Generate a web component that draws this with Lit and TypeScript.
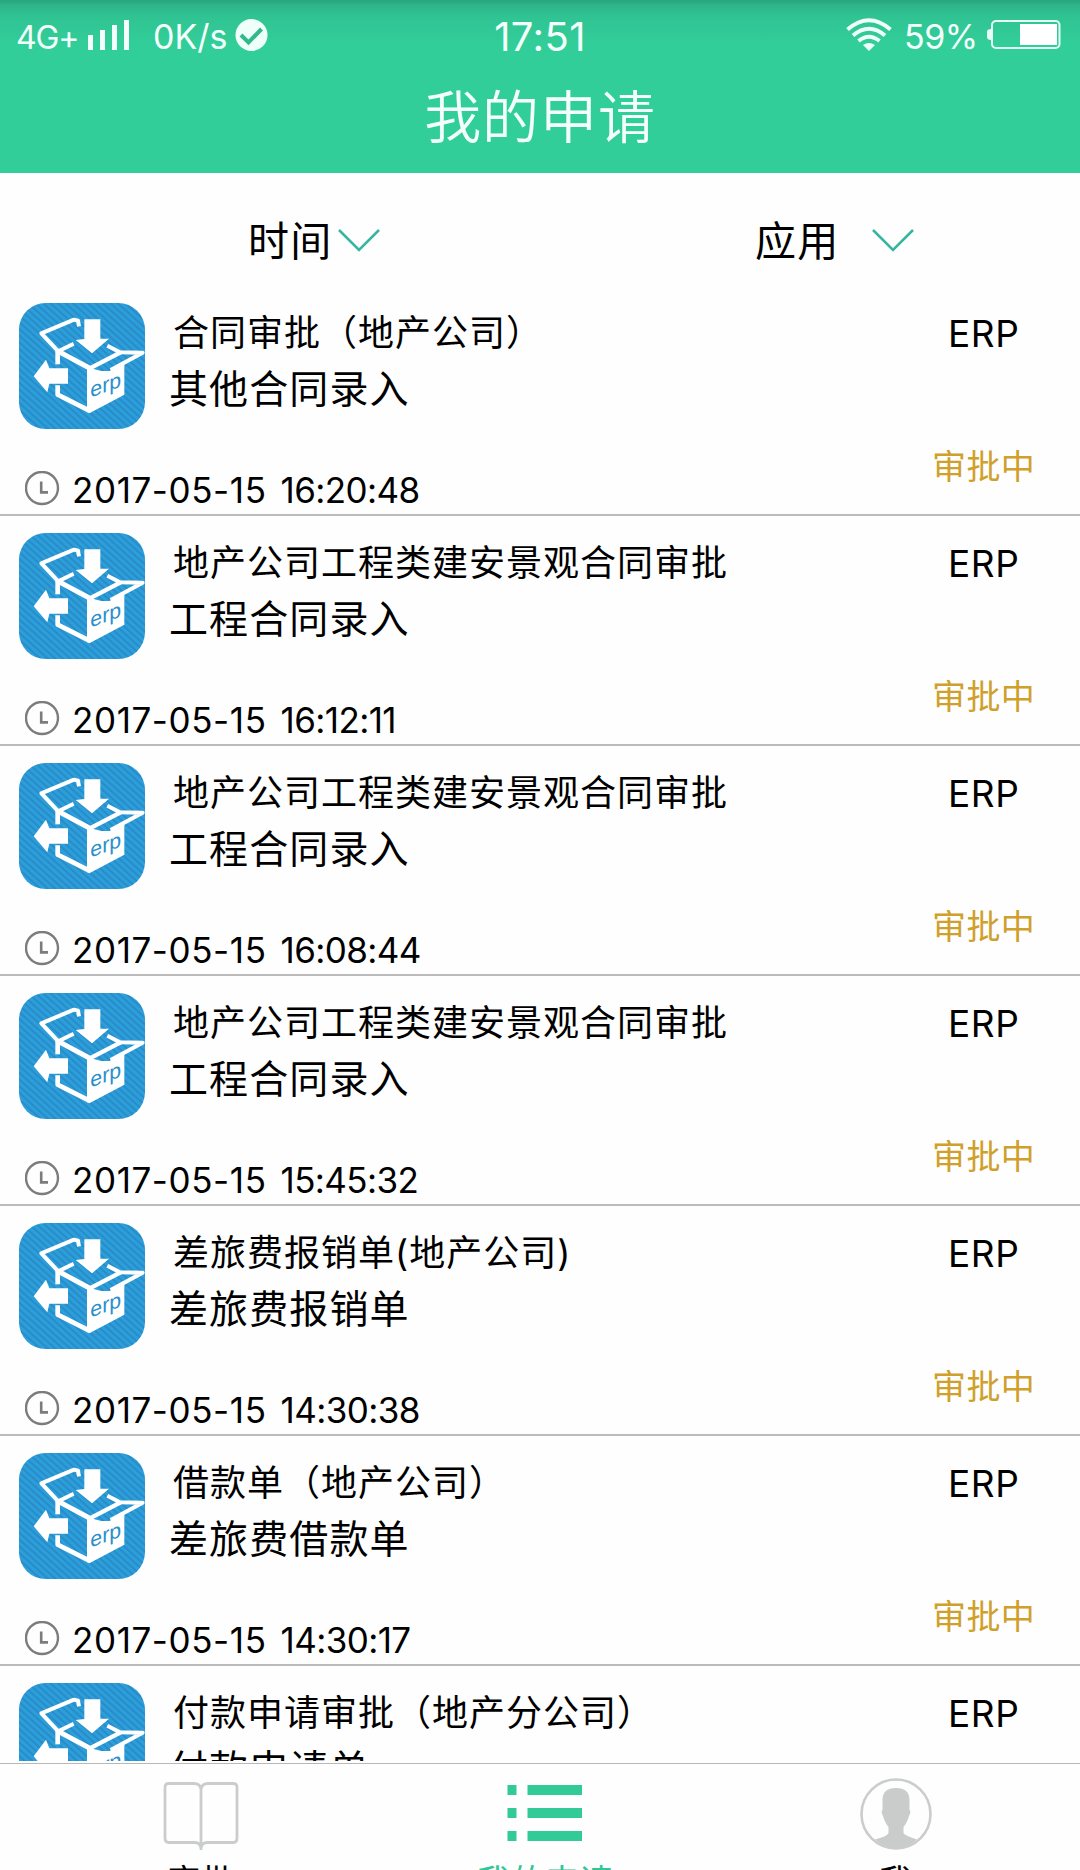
import { LitElement, html, css, nothing } from "lit";
import { customElement, property } from "lit/decorators.js";

interface Application {
  title: string;
  kind: string;
  date?: string;
  time?: string;
}

const APPLICATIONS: Application[] = [
  { title: "合同审批（地产公司）", kind: "其他合同录入", date: "2017-05-15", time: "16:20:48" },
  { title: "地产公司工程类建安景观合同审批", kind: "工程合同录入", date: "2017-05-15", time: "16:12:11" },
  { title: "地产公司工程类建安景观合同审批", kind: "工程合同录入", date: "2017-05-15", time: "16:08:44" },
  { title: "地产公司工程类建安景观合同审批", kind: "工程合同录入", date: "2017-05-15", time: "15:45:32" },
  { title: "差旅费报销单(地产公司)", kind: "差旅费报销单", date: "2017-05-15", time: "14:30:38" },
  { title: "借款单（地产公司）", kind: "差旅费借款单", date: "2017-05-15", time: "14:30:17" },
  { title: "付款申请审批（地产分公司）", kind: "付款申请单" },
];

@customElement("erp-icon")
export class ErpIcon extends LitElement {
  static styles = css`
    :host { display: block; width: 126px; height: 126px; }
    .art { display: block; width: 100%; height: 100%; }
    .word { font-family: "Liberation Sans", sans-serif; font-size: 64px; fill: #2a8fcb; }
  `;
  render() {
    return html`
      <svg class="art" viewBox="57 39 378 378">
        <defs>
          <pattern id="stripes" width="15" height="15" patternUnits="userSpaceOnUse" patternTransform="rotate(42)">
            <rect width="15" height="15" fill="#2b9fdc" />
            <rect width="15" height="6" fill="#2a8cc6" />
          </pattern>
        </defs>
        <rect x="57" y="39" width="378" height="378" rx="80" fill="url(#stripes)" />
        <g fill="none" stroke="#fff" stroke-width="12" stroke-linejoin="round">
          <path d="M237 109 L234 92 L222 89 L124 130 L175 184 L221 161" />
          <path d="M173 180 V223" stroke-width="14" />
          <path d="M173 286 V314 L268 362" stroke-width="14" />
          <path d="M175 184 L268 234" stroke-width="15" />
          <path d="M322 167 L360 187 L428 188 L332 240" />
          <path d="M268 236 L362 187" stroke-width="13" />
        </g>
        <path d="M261 232 L304 243 L328 243 L373 221 V314 L268 370 L261 366 Z" fill="#fff" />
        <path d="M253 88 H301 V146 H327 L276 190 L227 150 L253 147 Z" fill="#fff" />
        <path d="M101 259 L138 209 L148 235 H204 V281 H148 L142 307 Z" fill="#fff" />
        <text class="word" transform="matrix(1 -0.37 0 1 271 323)">erp</text>
      </svg>
    `;
  }
}

@customElement("application-row")
export class ApplicationRow extends LitElement {
  @property({ attribute: false }) item!: Application;

  static styles = css`
    :host {
      display: flex;
      flex-direction: column;
      justify-content: space-between;
      box-sizing: border-box;
      flex: none;
      height: 230px;
      padding-top: 17px;
      border-bottom: 2px solid #bbb;
      white-space: nowrap;
    }
    .top { display: flex; padding-left: 19px; height: 126px; }
    .texts { flex: 1; display: flex; flex-direction: column; padding: 4px 0 0 24px; }
    .title { font-size: 36px; line-height: 52px; letter-spacing: 1px; padding-left: 4px; }
    .kind { font-size: 39px; line-height: 60px; letter-spacing: 1.1px; }
    .source { width: 132px; font-size: 37px; line-height: 61px; letter-spacing: 0.6px; }
    .bottom { display: flex; height: 85px; padding: 36px 45px 0 25px; box-sizing: border-box; justify-content: space-between; }
    .when { display: flex; font-size: 35px; line-height: 51px; }
    .clock { width: 35px; height: 35px; margin: 6px 12px 0 0; }
    .date { letter-spacing: 0.6px; margin-right: 14px; }
    .time { letter-spacing: -0.6px; }
    .status { font-size: 34px; line-height: 40px; letter-spacing: 0.3px; color: #cfa12c; margin-top: -18px; }
  `;

  render() {
    const { title, kind, date, time } = this.item;
    return html`
      <div class="top">
        <erp-icon></erp-icon>
        <div class="texts">
          <span class="title">${title}</span>
          <span class="kind">${kind}</span>
        </div>
        <span class="source">ERP</span>
      </div>
      ${date
        ? html`<div class="bottom">
            <div class="when">
              <svg class="clock" viewBox="0 0 35 35" fill="none" stroke="#7c7c7c">
                <circle cx="17" cy="17" r="16" stroke-width="2.4" />
                <path d="M16.2 10.5 V21.4 H23" stroke-width="2.6" />
              </svg>
              <span class="date">${date}</span>
              <span class="time">${time}</span>
            </div>
            <span class="status">审批中</span>
          </div>`
        : nothing}
    `;
  }
}

@customElement("app-root")
export class AppRoot extends LitElement {
  static styles = css`
    :host {
      display: flex;
      flex-direction: column;
      width: 1080px;
      height: 1870px;
      overflow: hidden;
      background: #fefefe;
      color: #000;
      font-family: Inter, "Noto Sans CJK SC", sans-serif;
      white-space: nowrap;
    }
    .header {
      flex: none;
      height: 173px;
      color: #f4fffb;
      background: linear-gradient(#28a57c 0, #2bae83 3px, #2eb78b 6px, #30c493 18px, #32ce9a 45px, #32ce9a 100%);
    }
    .statusbar { display: grid; grid-template-columns: 1fr 100px 1fr; height: 74px; }
    .left { display: flex; padding-left: 16px; }
    .net { font-size: 32px; line-height: 76px; width: 71px; letter-spacing: -1.2px; }
    .bars { width: 43px; height: 31px; margin-top: 20px; }
    .speed { font-size: 34px; line-height: 74px; width: 82px; margin-left: 23px; }
    .check { width: 33px; height: 33px; margin-top: 19px; }
    .time { text-align: center; font-size: 40px; line-height: 74px; letter-spacing: 0.4px; }
    .right { display: flex; justify-content: flex-end; padding-right: 19px; }
    .wifi { width: 46px; height: 34px; margin-top: 18px; }
    .percent { font-size: 34px; line-height: 74px; width: 83px; margin-left: 12px; letter-spacing: -0.5px; }
    .battery { width: 74px; height: 30px; margin-top: 19px; }
    .heading { text-align: center; font-size: 57px; line-height: 87px; letter-spacing: 0.9px; font-weight: 350; }
    .filters { flex: none; display: flex; height: 113px; }
    .filter { display: flex; width: 540px; font-size: 41px; line-height: 60px; letter-spacing: 1.2px; padding: 38px 0 0 248px; box-sizing: border-box; }
    .filter.app { padding-left: 215px; }
    .arrow { width: 42px; height: 25px; margin: 17px 0 0 6px; }
    .app .arrow { margin-left: 33px; }
    .list { flex: none; display: flex; flex-direction: column; height: 1475px; overflow: hidden; }
    .tabs { flex: none; display: flex; justify-content: space-between; margin-top: 2px; border-top: 1px solid #b8b8b8; height: 106px; padding: 0 142px 0 159px; }
    .tab { display: flex; flex-direction: column; align-items: center; font-size: 34px; line-height: 50px; }
    .tab.active { color: #32c696; margin-right: 7px; }
    .glyph { flex: none; display: block; height: 74px; margin: 13px 0 6px; }
  `;

  render() {
    return html`
      <header class="header">
        <div class="statusbar">
          <div class="left">
            <span class="net">4G+</span>
            <svg class="bars" viewBox="0 0 43 31" fill="currentColor">
              <path d="M1 15h5v15h-5zM13 10h5v20h-5zM25 5h5v25h-5zM37 0h5v30h-5z" />
            </svg>
            <span class="speed">0K/s</span>
            <svg class="check" viewBox="0 0 33 33">
              <circle cx="16.5" cy="16" r="16" fill="#effff9" />
              <path d="M6 16 L13.5 23.5 L26.5 10" fill="none" stroke="#2fb98c" stroke-width="4" />
            </svg>
          </div>
          <span class="time">17:51</span>
          <div class="right">
            <svg class="wifi" viewBox="0 0 46 34" fill="none" stroke="#effff9" stroke-width="4">
              <path d="M1.5 11.5 Q23 -7 44.5 11.5" />
              <path d="M7 17.5 Q23 4 39 17.5" />
              <path d="M12.5 23 Q23 14.5 33.5 23" />
              <path d="M17 27 Q23 23 29 27 L23 33 Z" fill="#effff9" stroke="none" />
            </svg>
            <span class="percent">59%</span>
            <svg class="battery" viewBox="0 0 74 30">
              <rect x="5" y="2" width="67.5" height="27" rx="4" fill="none" stroke="#e6fff6" stroke-width="2" />
              <path d="M4 10 Q0 10 0 13 V18 Q0 21 4 21 Z" fill="#e6fff6" />
              <rect x="33" y="5" width="37" height="21" fill="#fff" />
            </svg>
          </div>
        </div>
        <div class="heading">我的申请</div>
      </header>
      <div class="filters">
        <div class="filter">
          时间
          <svg class="arrow" viewBox="0 0 42 25"><path d="M1 2 L21 22 L41 2" fill="none" stroke="#36b5a0" stroke-width="2.5" /></svg>
        </div>
        <div class="filter app">
          应用
          <svg class="arrow" viewBox="0 0 42 25"><path d="M1 2 L21 22 L41 2" fill="none" stroke="#36b5a0" stroke-width="2.5" /></svg>
        </div>
      </div>
      <main class="list">
        ${APPLICATIONS.map((item) => html`<application-row .item=${item}></application-row>`)}
      </main>
      <nav class="tabs">
        <div class="tab">
          <svg class="glyph" width="84" viewBox="0 0 84 74" fill="none" stroke="#cacdcc" stroke-width="2.8">
            <path d="M42 73 V12 Q41 6.5 35 6.5 H10 Q6 6.5 6 10.5 V61 Q6 65.5 10 65.5 H36 Q41 65.5 42 71 Q43 65.5 48 65.5 H74 Q78 65.5 78 61 V10.5 Q78 6.5 74 6.5 H49 Q43 6.5 42 12" />
          </svg>
          <span>审批</span>
        </div>
        <div class="tab active">
          <svg class="glyph" width="76" viewBox="0 0 76 74" fill="#32cb98">
            <path d="M0.5 8h9v10h-9zM20.5 8h54.5v10h-54.5zM0.5 31h9v10h-9zM20.5 31h54.5v10h-54.5zM0.5 54h9v10h-9zM20.5 54h54.5v10h-54.5z" />
          </svg>
          <span>我的申请</span>
        </div>
        <div class="tab">
          <svg class="glyph" width="84" viewBox="0 0 84 74">
            <circle cx="42" cy="37" r="34.5" fill="none" stroke="#cacdcc" stroke-width="2.6" />
            <path d="M42 11 C51 11 55.5 15 55.5 23 V33 Q57.5 34 55 39 Q53 46 49.5 50 V56 Q50 58 63 62.5 Q54 71.5 42 71.5 Q30 71.5 21 62.5 Q34 59 34.5 56 V50 Q31 46 29 39 Q26.5 34 28.5 33 V23 C28.5 15 33 11 42 11 Z" fill="#c9cccb" />
          </svg>
          <span>我</span>
        </div>
      </nav>
    `;
  }
}
